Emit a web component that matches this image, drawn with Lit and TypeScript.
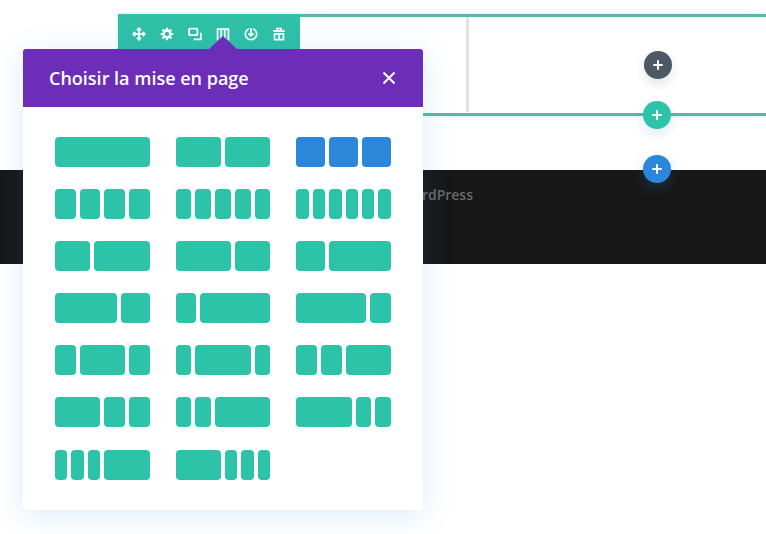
import { LitElement, html, css } from 'lit';
import { customElement } from 'lit/decorators.js';

// column widths of each layout thumbnail, read row by row
const LAYOUTS: number[][] = [
  [95], [45, 45], [29, 29, 29],
  [21, 20, 21, 21], [15, 16, 16, 16, 15], [13, 12, 13, 12, 12, 13],
  [35, 56], [55, 35], [29, 62],
  [62, 29], [20, 70], [70, 21],
  [21, 45, 21], [15, 56, 15], [21, 21, 45],
  [45, 21, 21], [15, 16, 55], [56, 15, 16],
  [12, 13, 12, 46], [45, 12, 13, 12],
];
const ACTIVE = 2;

const plus = html`<svg viewBox="0 0 12 12" width="12" height="12"><path d="M6 2v8M2 6h8" stroke="#fff" stroke-width="2" stroke-linecap="round" fill="none"/></svg>`;

const toolIcons = [
  html`<svg viewBox="0 0 16 16"><path d="M8 1.500v13M1.500 8h13" stroke-width="2"/><path d="M5.600 3.800 8 1.300l2.400 2.500M5.600 12.200 8 14.700l2.400-2.500M3.800 5.600 1.300 8l2.500 2.400M12.200 5.600 14.700 8l-2.500 2.400" stroke-width="1.900"/></svg>`,
  html`<svg viewBox="0 0 16 16"><circle cx="8" cy="8" r="3.900" stroke-width="2.800"/><path d="M8 .8v2.600M8 12.600v2.600M.8 8h2.600M12.600 8h2.600M2.900 2.900l1.900 1.900M11.200 11.200l1.900 1.900M2.900 13.100l1.900-1.900M11.200 4.800l1.900-1.900" stroke-width="2.500"/></svg>`,
  html`<svg viewBox="0 0 16 16"><rect x="1.300" y="1.800" width="9.400" height="7.400" rx=".8" stroke-width="2"/><path d="M14.700 6.500v7.700H6.500" stroke-width="2"/></svg>`,
  html`<svg viewBox="0 0 16 16"><path d="M1.800 15V2.300h12.400V15M6 3v12M10 3v12" stroke-width="2"/></svg>`,
  html`<svg viewBox="0 0 16 16"><path d="M5.600 1.900a6.500 6.500 0 1 0 4.800 0" stroke-width="1.900"/><path d="M8 1v9M5 7.200 8 10.200l3-3" stroke-width="1.900"/></svg>`,
  html`<svg viewBox="0 0 16 16"><path d="M1.300 4.600h13.400" stroke-width="2"/><path d="M5.500 4V1.600h5V4" stroke-width="1.700"/><path d="M2.900 7.800h10.200v6.700H2.900zM8 7.800v6.700" stroke-width="2"/></svg>`,
];

@customElement('app-root')
export class AppRoot extends LitElement {
  static styles = css`
    :host {
      display: block;
      position: relative;
      height: 534px;
      overflow: hidden;
      background: #fff;
      font-family: 'Open Sans', 'Liberation Sans', sans-serif;
    }
    .builder {
      margin: 14px 0 0 118px;
      height: 96px;
      border-top: 3px solid #5db5a9;
      border-bottom: 3px solid #5db5a9;
      box-shadow: 0 0 3px rgba(45, 220, 200, 0.35);
      display: grid;
      grid-template-columns: 351px 1fr;
    }
    .column {
      border-right: 3px solid #e2e2e2;
      margin-bottom: 1px;
    }
    .footer {
      margin-top: 54px;
      height: 94px;
      box-sizing: border-box;
      background: #171717;
      display: flex;
      justify-content: flex-end;
      padding: 14px 293px 0 0;
      color: #6a6a6a;
      font-size: 14px;
      font-weight: 600;
      line-height: 22px;
    }
    .toolbar {
      position: absolute;
      left: 118px;
      top: 14px;
      height: 35px;
      padding: 0 7px;
      display: flex;
      background: #2fc0a7;
      border-radius: 3px 0 0 0;
    }
    .tool {
      width: 28px;
      height: 40px;
      display: flex;
      align-items: center;
      justify-content: center;
    }
    .tool svg {
      width: 14px;
      height: 14px;
      fill: none;
      stroke: #fff;
    }
    .round {
      position: absolute;
      width: 28px;
      height: 28px;
      border-radius: 50%;
      display: flex;
      align-items: center;
      justify-content: center;
    }
    .round.dark {
      left: 644px;
      top: 51px;
      background: #4c5866;
      box-shadow: 0 5px 12px rgba(0, 0, 0, 0.12);
    }
    .round.teal {
      left: 643px;
      top: 101px;
      background: #2dc3a8;
      box-shadow: 0 5px 14px rgba(43, 135, 218, 0.18);
    }
    .round.blue {
      left: 643px;
      top: 155px;
      background: #2b87da;
      box-shadow: 0 5px 14px rgba(43, 135, 218, 0.25);
    }
    .panel {
      position: absolute;
      left: 23px;
      top: 49px;
      width: 400px;
      background: #fff;
      border-radius: 3px;
      box-shadow: 0 5px 30px rgba(43, 135, 218, 0.17);
    }
    .head {
      position: relative;
      height: 58px;
      padding: 0 27px 0 26px;
      display: flex;
      align-items: center;
      justify-content: space-between;
      background: #6c2eb9;
      border-radius: 3px 3px 0 0;
      color: #fff;
      font-size: 18px;
      font-weight: 600;
    }
    .head::before {
      content: '';
      position: absolute;
      left: 186px;
      top: -13px;
      width: 28px;
      height: 13px;
      background: #6c2eb9;
      clip-path: polygon(50% 0, 100% 100%, 0 100%);
    }
    .close {
      width: 14px;
      height: 14px;
      display: block;
    }
    .layouts {
      padding: 30px 32px;
      display: grid;
      grid-template-columns: 95px 94px 95px;
      column-gap: 26px;
      row-gap: 22px;
    }
    .layout {
      display: flex;
      gap: 4px;
      height: 30px;
    }
    .layout:nth-child(n + 19) {
      margin-top: 1px;
    }
    .layout span {
      display: block;
      border-radius: 4px;
      background: #2dc3a9;
    }
    .layout.active span {
      background: #2b87da;
    }
  `;

  render() {
    return html`
      <div class="builder">
        <div class="column"></div>
        <div></div>
      </div>
      <div class="footer"><span>Propulsé par WordPress</span></div>
      <div class="toolbar">
        ${toolIcons.map(icon => html`<div class="tool">${icon}</div>`)}
      </div>
      <div class="round dark">${plus}</div>
      <div class="round teal">${plus}</div>
      <div class="round blue">${plus}</div>
      <div class="panel">
        <div class="head">
          <span>Choisir la mise en page</span>
          <svg class="close" viewBox="0 0 14 14"><path d="M1.500 1.500l11 11M12.500 1.500l-11 11" stroke="#fff" stroke-width="2" fill="none"/></svg>
        </div>
        <div class="layouts">
          ${LAYOUTS.map((cols, i) => html`
            <div class="layout ${i === ACTIVE ? 'active' : ''}">
              ${cols.map(w => html`<span style="width:${w}px"></span>`)}
            </div>
          `)}
        </div>
      </div>
    `;
  }
}
